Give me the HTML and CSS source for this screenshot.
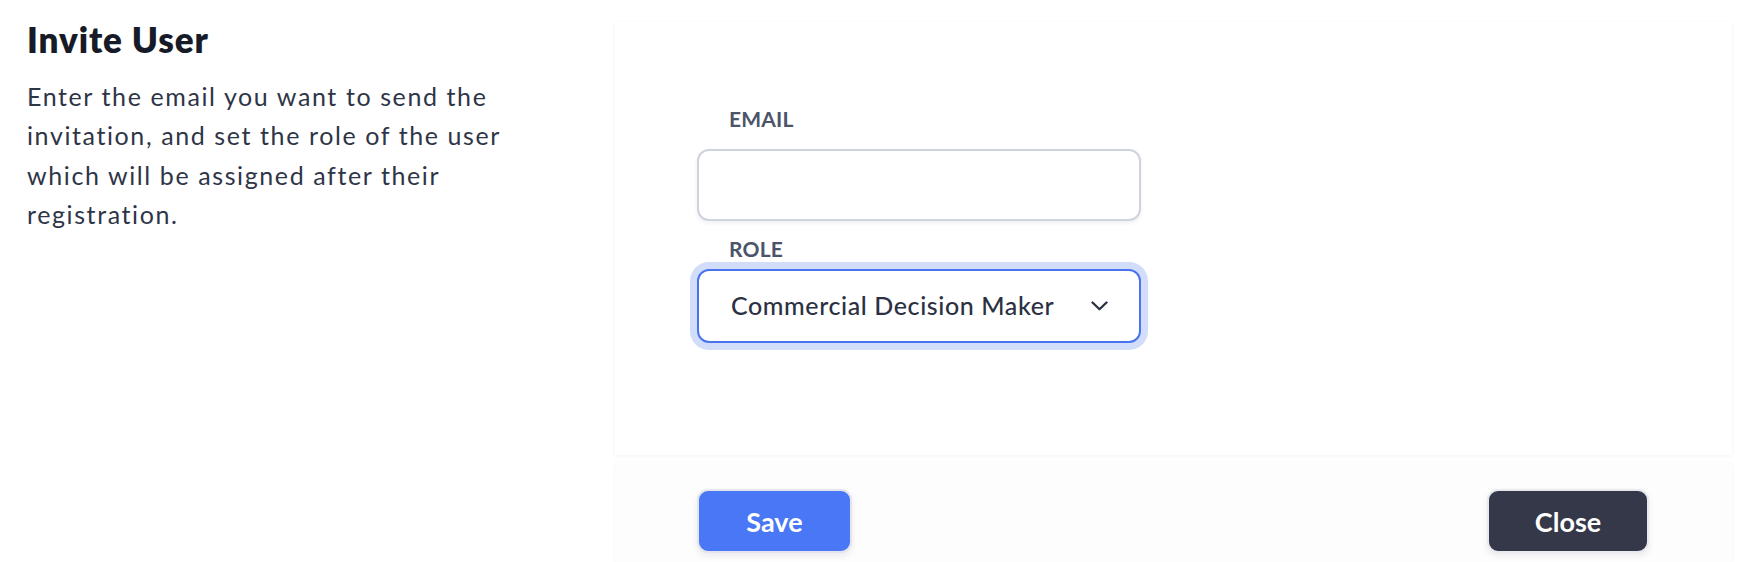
FILE: index.html
```html
<!DOCTYPE html>
<html lang="en">
<head>
<meta charset="utf-8">
<title>Invite User</title>
<link rel="stylesheet" href="styles.css">
</head>
<body>
<div class="page">
  <aside class="intro">
    <h1 class="title">Invite User</h1>
    <p class="desc">Enter the email you want to send the invitation, and set the role of the user which will be assigned after their registration.</p>
  </aside>
  <section class="panel">
    <div class="card">
      <div class="field field-email">
        <label class="label" for="email">EMAIL</label>
        <input class="input" id="email" type="email">
      </div>
      <div class="field field-role">
        <label class="label">ROLE</label>
        <div class="select">
          <span class="select-value">Commercial Decision Maker</span>
          <svg class="chevron" width="17" height="10" viewBox="0 0 17 10" aria-hidden="true">
            <path d="M1.5 1.5 L8.5 8.3 L15.5 1.5" fill="none" stroke="#2b3142" stroke-width="2.3" stroke-linecap="round" stroke-linejoin="round"/>
          </svg>
        </div>
      </div>
    </div>
    <div class="footer">
      <button class="btn btn-primary" type="button">Save</button>
      <button class="btn btn-dark" type="button">Close</button>
    </div>
  </section>
</div>
</body>
</html>
```
FILE: styles.css
```css
html, body {
  margin: 0;
  padding: 0;
  background: #ffffff;
}

body {
  width: 1752px;
  height: 562px;
  overflow: hidden;
  font-family: "Lato", "Noto Sans", sans-serif;
  color: #2d3748;
}

.page {
  display: flex;
  padding: 18px 20px 0 27px;
  height: 544px;
}

.intro {
  flex: 0 0 588px;
}

.title {
  margin: 0;
  font-size: 35px;
  line-height: 42px;
  font-weight: 800;
  letter-spacing: 0.9px;
  color: #171b27;
}

.desc {
  margin: 17px 0 0;
  width: 495px;
  font-size: 25px;
  line-height: 39.4px;
  letter-spacing: 1.6px;
  color: #2e3547;
}

.panel {
  flex: 1;
  display: flex;
  flex-direction: column;
}

.card {
  margin-top: 4px;
  height: 433px;
  box-sizing: border-box;
  padding: 83px 0 0 82px;
  background: #ffffff;
  box-shadow: 0 1px 4px rgba(20, 30, 60, 0.06);
}

.field {
  display: flex;
  flex-direction: column;
  align-items: flex-start;
}

.label {
  padding-left: 32px;
  font-size: 21px;
  line-height: 28px;
  font-weight: 700;
  color: #4b5469;
  letter-spacing: 0.2px;
}

.field-email .label {
  margin-bottom: 16px;
}

.field-role {
  margin-top: 14px;
}

.field-role .label {
  margin-bottom: 6px;
}

.input {
  width: 444px;
  height: 72px;
  box-sizing: border-box;
  border: 2px solid #cfd3de;
  border-radius: 12px;
  background: #ffffff;
  box-shadow: 0 2px 4px rgba(30, 40, 70, 0.07);
  outline: none;
}

.select {
  width: 444px;
  height: 74px;
  box-sizing: border-box;
  border: 2px solid #4a74ef;
  border-radius: 12px;
  box-shadow: 0 0 0 7px #d1ddf9;
  background: #ffffff;
  display: flex;
  align-items: center;
  justify-content: space-between;
  padding: 0 31px 0 32px;
}

.select-value {
  font-size: 25px;
  font-weight: 500;
  letter-spacing: 0.6px;
  color: #2b3142;
  padding-bottom: 3px;
}

.chevron {
  display: block;
}

.footer {
  margin-top: 7px;
  flex: 1;
  background: #fdfdfd;
  box-shadow: 0 1px 4px rgba(20, 30, 60, 0.05);
  display: flex;
  justify-content: space-between;
  align-items: flex-start;
  padding: 27px 83px 0 82px;
}

.btn {
  height: 64px;
  box-sizing: border-box;
  border-radius: 11px;
  border: 2px solid #e3e6ed;
  font-family: "Lato", "Noto Sans", sans-serif;
  font-size: 27px;
  font-weight: 700;
  color: #ffffff;
  cursor: pointer;
  box-shadow: 0 3px 6px rgba(20, 30, 60, 0.08);
}

.btn-primary {
  width: 155px;
  background: #4a77f6;
}

.btn-dark {
  width: 162px;
  background: #343849;
  border-color: #e8e9ee;
}
```
